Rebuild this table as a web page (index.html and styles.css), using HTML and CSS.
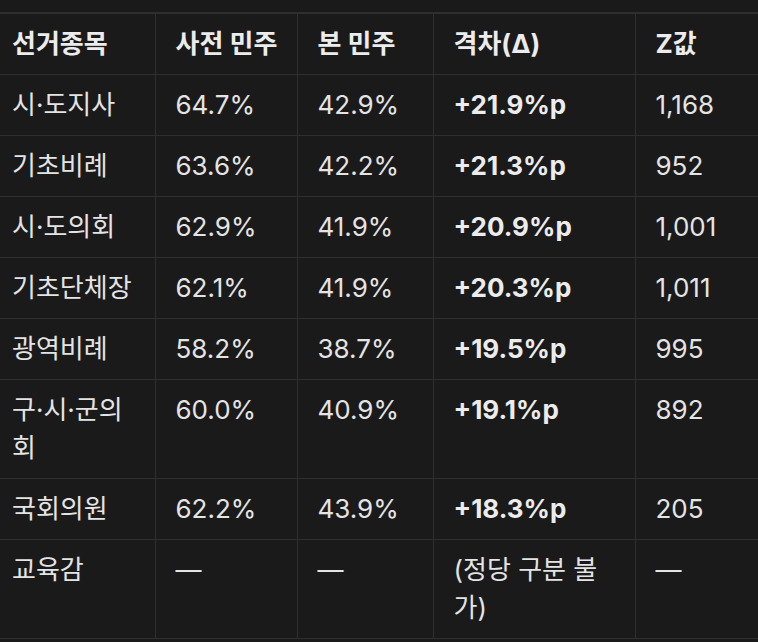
FILE: index.html
```html
<!DOCTYPE html>
<html lang="ko">
<head>
<meta charset="utf-8">
<title>선거종목</title>
<link rel="stylesheet" href="styles.css">
</head>
<body>
<table class="tbl">
  <colgroup>
    <col class="c1"><col class="c2"><col class="c3"><col class="c4"><col class="c5">
  </colgroup>
  <thead>
    <tr><th>선거종목</th><th>사전 민주</th><th>본 민주</th><th>격차(Δ)</th><th>Z값</th></tr>
  </thead>
  <tbody>
    <tr><td>시·도지사</td><td>64.7%</td><td>42.9%</td><td class="b">+21.9%p</td><td>1,168</td></tr>
    <tr><td>기초비례</td><td>63.6%</td><td>42.2%</td><td class="b">+21.3%p</td><td>952</td></tr>
    <tr><td>시·도의회</td><td>62.9%</td><td>41.9%</td><td class="b">+20.9%p</td><td>1,001</td></tr>
    <tr><td>기초단체장</td><td>62.1%</td><td>41.9%</td><td class="b">+20.3%p</td><td>1,011</td></tr>
    <tr><td>광역비례</td><td>58.2%</td><td>38.7%</td><td class="b">+19.5%p</td><td>995</td></tr>
    <tr><td>구·시·군의회</td><td>60.0%</td><td>40.9%</td><td class="b">+19.1%p</td><td>892</td></tr>
    <tr><td>국회의원</td><td>62.2%</td><td>43.9%</td><td class="b">+18.3%p</td><td>205</td></tr>
    <tr><td>교육감</td><td>—</td><td>—</td><td>(정당 구분 불가)</td><td>—</td></tr>
  </tbody>
</table>
</body>
</html>
```

FILE: styles.css
```css
html, body {
  margin: 0;
  padding: 0;
  background: #1a1a1a;
}
body {
  padding-top: 12px;
  font-family: Inter, "Noto Sans CJK KR", sans-serif;
  color: #e4e4e4;
}
.tbl {
  border-collapse: collapse;
  table-layout: fixed;
  width: 758px;
  font-size: 26px;
  line-height: 38px;
}
.c1 { width: 155px; }
.c2 { width: 142px; }
.c3 { width: 136px; }
.c4 { width: 202px; }
.c5 { width: 123px; }
.tbl th, .tbl td {
  border: 1px solid #2e2e2e;
  padding: 11px 8px 11px 20px;
  text-align: left;
  vertical-align: top;
}
.tbl th:first-child, .tbl td:first-child {
  border-left: none;
  padding-left: 12px;
}
.tbl thead th {
  border-top: 2px solid #2e2e2e;
  font-weight: 700;
  color: #ececec;
}
.tbl td.b {
  font-weight: 700;
  color: #ececec;
}
```
